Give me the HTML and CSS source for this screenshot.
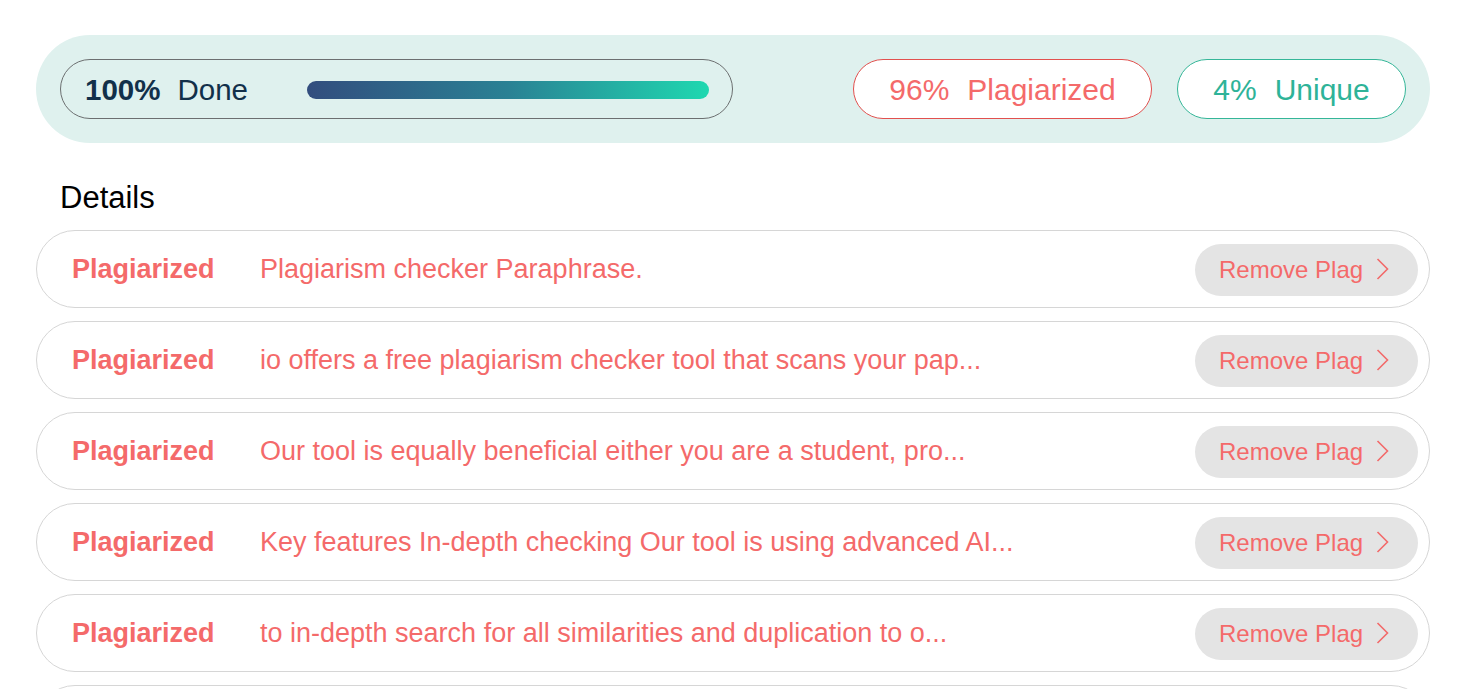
FILE: index.html
```html
<!DOCTYPE html>
<html>
<head>
<meta charset="utf-8">
<link rel="stylesheet" href="styles.css">
</head>
<body>
<div class="page">
  <div class="summary">
    <div class="progress">
      <span class="pct">100%</span><span class="done">Done</span>
      <div class="bar"></div>
    </div>
    <div class="stats">
      <div class="stat stat-plag"><span class="num">96%</span><span>Plagiarized</span></div>
      <div class="stat stat-uniq"><span class="num">4%</span><span>Unique</span></div>
    </div>
  </div>

  <h2 class="details-title">Details</h2>

  <div class="list">
    <div class="row">
      <span class="label">Plagiarized</span>
      <span class="text">Plagiarism checker Paraphrase.</span>
      <button class="remove">Remove Plag <svg class="chev" width="13" height="22" viewBox="0 0 13 22"><path d="M1.5 1 L11.5 11 L1.5 21" fill="none" stroke="#f26a6a" stroke-width="1.6"/></svg></button>
    </div>
    <div class="row">
      <span class="label">Plagiarized</span>
      <span class="text">io offers a free plagiarism checker tool that scans your pap...</span>
      <button class="remove">Remove Plag <svg class="chev" width="13" height="22" viewBox="0 0 13 22"><path d="M1.5 1 L11.5 11 L1.5 21" fill="none" stroke="#f26a6a" stroke-width="1.6"/></svg></button>
    </div>
    <div class="row">
      <span class="label">Plagiarized</span>
      <span class="text">Our tool is equally beneficial either you are a student, pro...</span>
      <button class="remove">Remove Plag <svg class="chev" width="13" height="22" viewBox="0 0 13 22"><path d="M1.5 1 L11.5 11 L1.5 21" fill="none" stroke="#f26a6a" stroke-width="1.6"/></svg></button>
    </div>
    <div class="row">
      <span class="label">Plagiarized</span>
      <span class="text">Key features In-depth checking Our tool is using advanced AI...</span>
      <button class="remove">Remove Plag <svg class="chev" width="13" height="22" viewBox="0 0 13 22"><path d="M1.5 1 L11.5 11 L1.5 21" fill="none" stroke="#f26a6a" stroke-width="1.6"/></svg></button>
    </div>
    <div class="row">
      <span class="label">Plagiarized</span>
      <span class="text">to in-depth search for all similarities and duplication to o...</span>
      <button class="remove">Remove Plag <svg class="chev" width="13" height="22" viewBox="0 0 13 22"><path d="M1.5 1 L11.5 11 L1.5 21" fill="none" stroke="#f26a6a" stroke-width="1.6"/></svg></button>
    </div>
    <div class="row row-next"></div>
  </div>
</div>
</body>
</html>
```

FILE: styles.css
```css
* { box-sizing: border-box; }

html, body {
  margin: 0;
  padding: 0;
  background: #ffffff;
  font-family: "Liberation Sans", Arial, sans-serif;
}

body { overflow: hidden; height: 689px; }

.page {
  width: 1394px;
  margin-left: 36px;
  padding-top: 35px;
}

.summary {
  height: 108px;
  background: #dff1ee;
  border-radius: 54px;
  padding: 0 24px;
  display: flex;
  align-items: center;
  justify-content: space-between;
}

.progress {
  width: 673px;
  height: 60px;
  border: 1px solid #6c6f70;
  border-radius: 30px;
  display: flex;
  align-items: center;
  padding: 1px 23px 0 24px;
  color: #12304a;
  font-size: 29.5px;
}

.pct { font-weight: bold; }
.done { margin-left: 17px; }

.bar {
  margin-left: auto;
  width: 402px;
  height: 18px;
  border-radius: 9px;
  background: linear-gradient(90deg, #324d7e 0%, #2a8194 50%, #1fd8b0 100%);
}

.stats {
  display: flex;
  gap: 25px;
}

.stat {
  height: 60px;
  border-radius: 30px;
  background: #ffffff;
  display: flex;
  align-items: center;
  justify-content: center;
  padding-top: 1px;
  font-size: 30px;
}

.stat .num { margin-right: 18px; }

.stat-plag {
  width: 299px;
  border: 1px solid #e2504e;
  color: #f46a6a;
}

.stat-uniq {
  width: 229px;
  border: 1px solid #35b698;
  color: #2eb398;
}

.details-title {
  margin: 37px 0 14px 24px;
  font-size: 31px;
  line-height: 36px;
  font-weight: normal;
  color: #000000;
}

.list {
  display: flex;
  flex-direction: column;
  gap: 13px;
}

.row {
  height: 78px;
  border: 1px solid #d6d6d6;
  border-radius: 39px;
  display: flex;
  align-items: center;
  padding: 1px 11px 0 35px;
  color: #f46a6a;
  flex-shrink: 0;
}

.label {
  width: 188px;
  font-size: 27px;
  font-weight: bold;
  flex-shrink: 0;
}

.text {
  font-size: 27px;
  flex: 1;
  white-space: nowrap;
}

.remove {
  width: 223px;
  height: 52px;
  border: none;
  border-radius: 26px;
  background: #e4e4e4;
  color: #f46a6a;
  font-family: "Liberation Sans", Arial, sans-serif;
  font-size: 24px;
  display: flex;
  align-items: center;
  padding: 1px 0 0 24px;
  gap: 13px;
}

.chev { display: block; margin-top: -2px; }
```
